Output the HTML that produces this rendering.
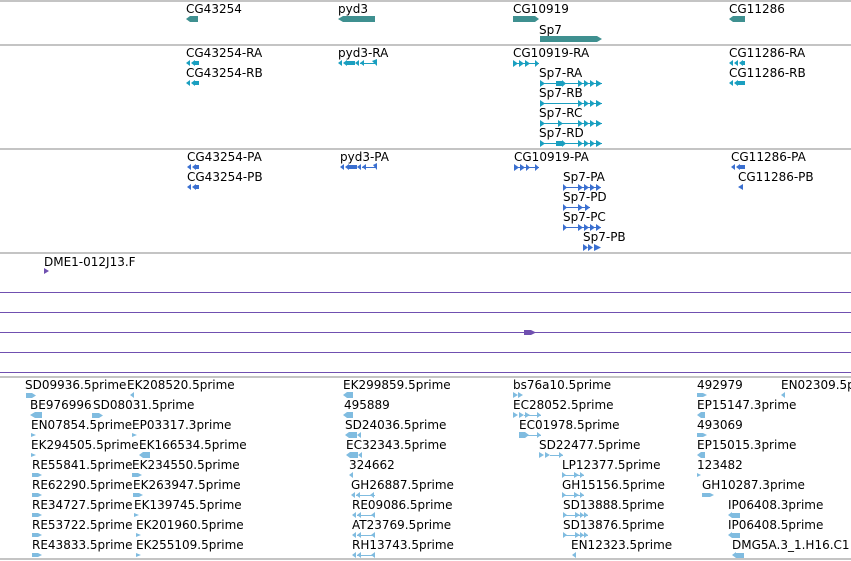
<!DOCTYPE html>
<html><head><meta charset="utf-8"><style>
body{margin:0;width:851px;height:561px;overflow:hidden;background:#fff;position:relative;font-family:"DejaVu Sans","Liberation Sans",sans-serif;font-size:12px;color:#000}
.t{position:absolute;line-height:14px;white-space:nowrap}
.h{position:absolute;left:0;width:851px;height:2px;background:#c4c4c4}
.p{position:absolute;left:0;width:851px;height:1px;background:#7050b0}
svg{position:absolute;left:0;top:0}
</style></head><body>
<div class="h" style="top:0"></div>
<div class="h" style="top:44px"></div>
<div class="h" style="top:148px"></div>
<div class="h" style="top:252px"></div>
<div class="h" style="top:376px"></div>
<div class="h" style="top:558px"></div>
<div class="p" style="top:292px"></div>
<div class="p" style="top:312px"></div>
<div class="p" style="top:332px"></div>
<div class="p" style="top:352px"></div>
<div class="p" style="top:372px"></div>

<div class="t" style="left:186px;top:2px">CG43254</div>
<div class="t" style="left:338px;top:2px">pyd3</div>
<div class="t" style="left:513px;top:2px">CG10919</div>
<div class="t" style="left:539px;top:23px">Sp7</div>
<div class="t" style="left:729px;top:2px">CG11286</div>

<div class="t" style="left:186px;top:46px">CG43254-RA</div>
<div class="t" style="left:186px;top:66px">CG43254-RB</div>
<div class="t" style="left:338px;top:46px">pyd3-RA</div>
<div class="t" style="left:513px;top:46px">CG10919-RA</div>
<div class="t" style="left:539px;top:66px">Sp7-RA</div>
<div class="t" style="left:539px;top:86px">Sp7-RB</div>
<div class="t" style="left:539px;top:106px">Sp7-RC</div>
<div class="t" style="left:539px;top:126px">Sp7-RD</div>
<div class="t" style="left:729px;top:46px">CG11286-RA</div>
<div class="t" style="left:729px;top:66px">CG11286-RB</div>

<div class="t" style="left:187px;top:150px">CG43254-PA</div>
<div class="t" style="left:187px;top:170px">CG43254-PB</div>
<div class="t" style="left:340px;top:150px">pyd3-PA</div>
<div class="t" style="left:514px;top:150px">CG10919-PA</div>
<div class="t" style="left:563px;top:170px">Sp7-PA</div>
<div class="t" style="left:563px;top:190px">Sp7-PD</div>
<div class="t" style="left:563px;top:210px">Sp7-PC</div>
<div class="t" style="left:583px;top:230px">Sp7-PB</div>
<div class="t" style="left:731px;top:150px">CG11286-PA</div>
<div class="t" style="left:738px;top:170px">CG11286-PB</div>

<div class="t" style="left:44px;top:255px">DME1-012J13.F</div>

<div class="t" style="left:25px;top:378px">SD09936.5prime</div>
<div class="t" style="left:127px;top:378px">EK208520.5prime</div>
<div class="t" style="left:30px;top:398px">BE976996</div>
<div class="t" style="left:93px;top:398px">SD08031.5prime</div>
<div class="t" style="left:31px;top:418px">EN07854.5prime</div>
<div class="t" style="left:132px;top:418px">EP03317.3prime</div>
<div class="t" style="left:31px;top:438px">EK294505.5prime</div>
<div class="t" style="left:139px;top:438px">EK166534.5prime</div>
<div class="t" style="left:32px;top:458px">RE55841.5prime</div>
<div class="t" style="left:132px;top:458px">EK234550.5prime</div>
<div class="t" style="left:32px;top:478px">RE62290.5prime</div>
<div class="t" style="left:133px;top:478px">EK263947.5prime</div>
<div class="t" style="left:32px;top:498px">RE34727.5prime</div>
<div class="t" style="left:134px;top:498px">EK139745.5prime</div>
<div class="t" style="left:32px;top:518px">RE53722.5prime</div>
<div class="t" style="left:136px;top:518px">EK201960.5prime</div>
<div class="t" style="left:32px;top:538px">RE43833.5prime</div>
<div class="t" style="left:136px;top:538px">EK255109.5prime</div>

<div class="t" style="left:343px;top:378px">EK299859.5prime</div>
<div class="t" style="left:344px;top:398px">495889</div>
<div class="t" style="left:345px;top:418px">SD24036.5prime</div>
<div class="t" style="left:346px;top:438px">EC32343.5prime</div>
<div class="t" style="left:349px;top:458px">324662</div>
<div class="t" style="left:351px;top:478px">GH26887.5prime</div>
<div class="t" style="left:352px;top:498px">RE09086.5prime</div>
<div class="t" style="left:352px;top:518px">AT23769.5prime</div>
<div class="t" style="left:352px;top:538px">RH13743.5prime</div>

<div class="t" style="left:513px;top:378px">bs76a10.5prime</div>
<div class="t" style="left:513px;top:398px">EC28052.5prime</div>
<div class="t" style="left:519px;top:418px">EC01978.5prime</div>
<div class="t" style="left:539px;top:438px">SD22477.5prime</div>
<div class="t" style="left:562px;top:458px">LP12377.5prime</div>
<div class="t" style="left:562px;top:478px">GH15156.5prime</div>
<div class="t" style="left:563px;top:498px">SD13888.5prime</div>
<div class="t" style="left:563px;top:518px">SD13876.5prime</div>
<div class="t" style="left:571px;top:538px">EN12323.5prime</div>

<div class="t" style="left:697px;top:378px">492979</div>
<div class="t" style="left:781px;top:378px">EN02309.5prime</div>
<div class="t" style="left:697px;top:398px">EP15147.3prime</div>
<div class="t" style="left:697px;top:418px">493069</div>
<div class="t" style="left:697px;top:438px">EP15015.3prime</div>
<div class="t" style="left:697px;top:458px">123482</div>
<div class="t" style="left:702px;top:478px">GH10287.3prime</div>
<div class="t" style="left:728px;top:498px">IP06408.3prime</div>
<div class="t" style="left:728px;top:518px">IP06408.5prime</div>
<div class="t" style="left:732px;top:538px">DMG5A.3_1.H16.C1</div>

<svg width="851" height="561">
<g fill="#3f9090">
<polygon points="186,19 190,16 198,16 198,22 190,22"/>
<polygon points="338,19 343,16 375,16 375,22 343,22"/>
<polygon points="513,16 535,16 539,19 535,22 513,22"/>
<polygon points="540,36 597,36 602,39 597,42 540,42"/>
<polygon points="729,19 733,16 745,16 745,22 733,22"/>
</g>
<g fill="#1a9fc0" stroke="#1a9fc0" stroke-width="1">
<path d="M186,63l4-3v6zM191,63l4-3v6zM195,61h4v4h-4z M186,83l4-3v6zM191,83l4-3v6zM195,81h4v4h-4z" stroke="none"/>
<path d="M338,63l4-3v6zM343,63l4-3v6zM347,61h8v4h-8zM355,63l4-3v6zM360,63l4-3v6z M372,61l5-2v7z" stroke="none"/>
<line x1="360" y1="63.5" x2="376" y2="63.5"/>
<line x1="513" y1="63.5" x2="539" y2="63.5"/>
<path d="M513,60l5,3.5-5,3.5zM519,60l5,3.5-5,3.5zM525,60l5,3.5-5,3.5zM535,60l4,3.5-4,3.5z" stroke="none"/>
<line x1="540" y1="83.5" x2="602" y2="83.5"/><line x1="540" y1="103.5" x2="602" y2="103.5"/><line x1="540" y1="123.5" x2="602" y2="123.5"/><line x1="540" y1="143.5" x2="602" y2="143.5"/>
<path d="M540,80l5,3.5-5,3.5zM556,81h6v5h-6zM562,80l4,3.5-4,3.5zM578,80l5,3.5-5,3.5zM584,80l5,3.5-5,3.5zM590,80l5,3.5-5,3.5zM596,80l6,3.5-6,3.5z
M540,100l5,3.5-5,3.5zM578,100l5,3.5-5,3.5zM584,100l5,3.5-5,3.5zM590,100l5,3.5-5,3.5zM596,100l6,3.5-6,3.5z
M540,120l5,3.5-5,3.5zM558,120l5,3.5-5,3.5zM578,120l5,3.5-5,3.5zM584,120l5,3.5-5,3.5zM590,120l5,3.5-5,3.5zM596,120l6,3.5-6,3.5z
M540,140l5,3.5-5,3.5zM556,141h6v5h-6zM562,140l4,3.5-4,3.5zM578,140l5,3.5-5,3.5zM584,140l5,3.5-5,3.5zM590,140l5,3.5-5,3.5zM596,140l6,3.5-6,3.5z" stroke="none"/>
<path d="M729,63l4-3v6zM734,63l4-3v6zM739,63l4-3v6zM743,61h2v4h-2z M729,83l4-3v6zM734,83l4-3v6zM738,81h7v4h-7z" stroke="none"/>
</g>
<g fill="#3a6fd0" stroke="#3a6fd0">
<path d="M187,167l4-3v6zM192,167l4-3v6zM196,165h3v4h-3z M187,187l4-3v6zM192,187l4-3v6zM196,185h3v4h-3z" stroke="none"/>
<path d="M340,167l4-3v6zM345,167l4-3v6zM349,165h8v4h-8zM357,167l4-3v6zM362,167l4-3v6zM373,165l4-2v7z" stroke="none"/>
<line x1="362" y1="167.5" x2="377" y2="167.5"/>
<line x1="514" y1="167.5" x2="539" y2="167.5"/>
<path d="M514,164l5,3.5-5,3.5zM520,164l5,3.5-5,3.5zM526,164l4,3.5-4,3.5zM535,164l4,3.5-4,3.5z" stroke="none"/>
<line x1="563" y1="187.5" x2="601" y2="187.5"/><line x1="563" y1="207.5" x2="590" y2="207.5"/><line x1="563" y1="227.5" x2="601" y2="227.5"/>
<path d="M563,184l4,3.5-4,3.5zM578,184l5,3.5-5,3.5zM584,184l5,3.5-5,3.5zM590,184l5,3.5-5,3.5zM596,184l5,3.5-5,3.5z
M563,204l4,3.5-4,3.5zM578,204l5,3.5-5,3.5zM585,204l5,3.5-5,3.5z
M563,224l4,3.5-4,3.5zM578,224l5,3.5-5,3.5zM584,224l5,3.5-5,3.5zM590,224l5,3.5-5,3.5zM596,224l5,3.5-5,3.5z
M583,244l5,3.5-5,3.5zM588,244l5,3.5-5,3.5zM594,244l7,3.5-7,3.5z
M731,167l4-3v6zM736,167l4-3v6zM740,165h5v4h-5z M738,187l5-3v6z" stroke="none"/>
</g>
<g fill="#7050b0">
<path d="M44,268l5,3-5,3z"/>
<path d="M524,330h7l5,2.5-5,2.5h-7z"/>
</g>
<g fill="#80bce0" stroke="#80bce0">
<path d="M26,393h6l4,2.5-4,2.5h-6z M130,395l4-3v6z
M30,415l5-3h7v6h-7z M92,413h7l4,2.5-4,2.5h-7z
M31,433l5,2-5,2z M132,433l5,2-5,2z
M31,453l5,2-5,2z M139,455l4-3h7v6h-7z
M32,473h6l4,2-4,2h-6z M132,473h6l4,2-4,2h-6z
M32,493h6l4,2-4,2h-6z M133,493h6l4,2-4,2h-6z
M32,513h6l4,2-4,2h-6z M134,513l5,2-5,2z
M32,533h6l4,2-4,2h-6z M136,533l5,2-5,2z
M32,553h6l4,2-4,2h-6z M136,553l5,2-5,2z" stroke="none"/>
<path d="M343,395l4-3h6v6h-6z M343,415l4-3h6v6h-6z M345,435l4-3h8v6h-8zM357,435l4-3v6z M346,455l4-3h8v6h-8zM358,455l4-3v6z M349,475l4-3v6z
M351,495l4-3v6zM356,495l4-3v6zM370,495l4-3v6z M352,515l4-3v6zM357,515l4-3v6zM371,515l4-3v6z M352,535l4-3v6zM357,535l4-3v6zM371,535l4-3v6z M352,555l4-3v6zM357,555l4-3v6zM371,555l4-3v6z" stroke="none"/>
<line x1="356" y1="495.5" x2="375" y2="495.5"/><line x1="357" y1="515.5" x2="375" y2="515.5"/><line x1="357" y1="535.5" x2="375" y2="535.5"/><line x1="357" y1="555.5" x2="375" y2="555.5"/>
<path d="M513,392l5,3-5,3zM518,392l5,3-5,3z M513,412l5,3-5,3zM519,412l5,3-5,3zM525,412l5,3-5,3zM537,412l4,3-4,3z M519,432h6l4,3-4,3h-6zM537,432l4,3-4,3z
M539,452l5,3-5,3zM545,452l5,3-5,3zM559,452l4,3-4,3z M562,472l4,3-4,3zM574,472l5,3-5,3zM580,472l4,3-4,3z M562,492l4,3-4,3zM574,492l5,3-5,3zM580,492l4,3-4,3z
M563,512l4,3-4,3zM575,512l5,3-5,3zM580,512l4,3-4,3zM584,512l4,3-4,3z M563,532l4,3-4,3zM575,532l5,3-5,3zM580,532l4,3-4,3zM584,532l4,3-4,3z M572,555l4-3v6z" stroke="none"/>
<line x1="524" y1="415.5" x2="541" y2="415.5"/><line x1="524" y1="435.5" x2="541" y2="435.5"/><line x1="550" y1="455.5" x2="563" y2="455.5"/>
<line x1="562" y1="475.5" x2="584" y2="475.5"/><line x1="562" y1="495.5" x2="584" y2="495.5"/><line x1="563" y1="515.5" x2="588" y2="515.5"/><line x1="563" y1="535.5" x2="588" y2="535.5"/>
<path d="M697,393h6l4,2-4,2h-6z M781,395l4-3v6z M697,415l4-3h4v6h-4z M697,433h6l4,2-4,2h-6z M697,455l4-3h4v6h-4z M697,473l4,2-4,2z M702,493h8l4,2-4,2h-8z
M728,515l4-3v6zM732,513h8v5h-8z M728,535l4-3v6zM732,533h8v5h-8z M732,555l4-3v6zM736,553h8v5h-8z" stroke="none"/>
</g>
</svg>
</body></html>
